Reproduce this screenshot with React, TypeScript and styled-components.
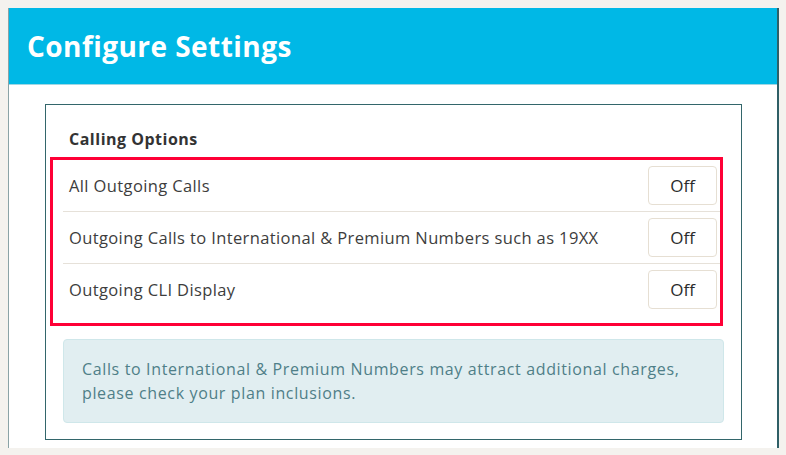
import React from "react";
import styled, { createGlobalStyle } from "styled-components";

const GlobalStyle = createGlobalStyle`
  html, body {
    margin: 0;
    padding: 0;
    background: #f4f2ee;
    font-family: "Open Sans", "Liberation Sans", sans-serif;
  }
`;

const Page = styled.div`
  padding: 8px 7px 0 8px;
  height: 455px;
  box-sizing: border-box;
  overflow: hidden;
`;

const Panel = styled.div`
  width: 771px;
  height: 440px;
  box-sizing: border-box;
  background: #ffffff;
  border-left: 1px solid #8aa3a6;
  border-right: 2px solid #2f5f66;
  display: flex;
  flex-direction: column;
`;

const Header = styled.div`
  height: 77px;
  box-sizing: border-box;
  background: #00b8e6;
  border-bottom: 1px solid #9fd7e4;
  display: flex;
  align-items: center;
  padding: 0 0 0 18px;
`;

const Title = styled.h1`
  margin: 0;
  color: #ffffff;
  font-size: 28px;
  font-weight: 700;
  letter-spacing: 0.45px;
`;

const Body = styled.div`
  padding: 19px 35px 0 36px;
`;

const Card = styled.div`
  border: 1px solid #33666b;
  height: 336px;
  box-sizing: border-box;
  padding: 0 18px 0 4px;
`;

const SectionTitle = styled.h2`
  margin: 0;
  padding: 24px 0 7px 19px;
  font-size: 16px;
  line-height: 21px;
  font-weight: 700;
  letter-spacing: 0.5px;
  color: #333333;
`;

const Highlight = styled.div`
  border: 3px solid #ff0036;
  width: 673px;
  box-sizing: border-box;
  padding: 0 0 8px 10px;
`;

const Row = styled.div<{ $last?: boolean }>`
  height: ${(p) => (p.$last ? 51 : 52)}px;
  box-sizing: border-box;
  display: flex;
  align-items: center;
  justify-content: space-between;
  padding: 0 3px 0 6px;
  border-bottom: ${(p) => (p.$last ? "none" : "1px solid #e6e1d9")};
`;

const Label = styled.span`
  font-size: 16.5px;
  letter-spacing: 0.38px;
  color: #3d3d3d;
`;

const ToggleButton = styled.button`
  width: 69px;
  height: 39px;
  box-sizing: border-box;
  border: 1px solid #e6dfd3;
  border-radius: 4px;
  background: #ffffff;
  font-family: inherit;
  font-size: 17px;
  color: #2b2b2b;
  cursor: pointer;
  padding: 0;
`;

const Notice = styled.div`
  margin: 13px 0 0 13px;
  width: 661px;
  height: 84px;
  box-sizing: border-box;
  background: #e1eef1;
  border: 1px solid #cfe7ea;
  border-radius: 4px;
  padding: 17px 18px;
  font-size: 16px;
  line-height: 24px;
  letter-spacing: 0.64px;
  color: #4f7f88;
`;

const options = [
  "All Outgoing Calls",
  "Outgoing Calls to International & Premium Numbers such as 19XX",
  "Outgoing CLI Display",
];

export default function App() {
  return (
    <Page>
      <GlobalStyle />
      <Panel>
        <Header>
          <Title>Configure Settings</Title>
        </Header>
        <Body>
          <Card>
            <SectionTitle>Calling Options</SectionTitle>
            <Highlight>
              {options.map((o, i) => (
                <Row key={o} $last={i === options.length - 1}>
                  <Label>{o}</Label>
                  <ToggleButton>Off</ToggleButton>
                </Row>
              ))}
            </Highlight>
            <Notice>
              Calls to International &amp; Premium Numbers may attract additional charges,
              <br />
              please check your plan inclusions.
            </Notice>
          </Card>
        </Body>
      </Panel>
    </Page>
  );
}
